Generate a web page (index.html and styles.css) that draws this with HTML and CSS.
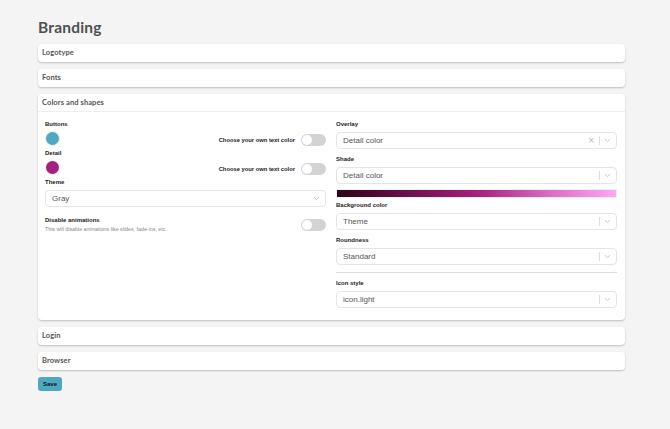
FILE: index.html
```html
<!DOCTYPE html>
<html>
<head>
<meta charset="utf-8">
<link rel="stylesheet" href="styles.css">
</head>
<body>
<div class="page">
  <h1 class="title">Branding</h1>
  <div class="card"><div class="card-head">Logotype</div></div>
  <div class="card"><div class="card-head">Fonts</div></div>
  <div class="card">
    <div class="card-head divided">Colors and shapes</div>
    <div class="card-body">
      <div class="col">
        <div class="label">Buttons</div>
        <div class="color-row">
          <span class="swatch swatch-blue"></span>
          <span class="toggle-wrap"><span class="toggle-label">Choose your own text color</span><span class="toggle"></span></span>
        </div>
        <div class="label">Detail</div>
        <div class="color-row">
          <span class="swatch swatch-purple"></span>
          <span class="toggle-wrap"><span class="toggle-label">Choose your own text color</span><span class="toggle"></span></span>
        </div>
        <div class="label">Theme</div>
        <div class="select"><span class="select-value">Gray</span><span class="chev-only"><svg width="7" height="5" viewBox="0 0 7 5"><path d="M1 1.2 L3.5 3.6 L6 1.2" fill="none" stroke="#bbb" stroke-width="0.8"/></svg></span></div>
        <div class="anim-row">
          <div>
            <div class="anim-title">Disable animations</div>
            <div class="anim-sub">This will disable animations like slides, fade-ins, etc.</div>
          </div>
          <span class="toggle"></span>
        </div>
      </div>
      <div class="col">
        <div class="label">Overlay</div>
        <div class="select"><span class="select-value">Detail color</span><span class="indicators"><span class="clear">×</span><span class="sep"></span><svg width="7" height="5" viewBox="0 0 7 5"><path d="M1 1.2 L3.5 3.6 L6 1.2" fill="none" stroke="#bbb" stroke-width="0.8"/></svg></span></div>
        <div class="label gap">Shade</div>
        <div class="select"><span class="select-value">Detail color</span><span class="indicators"><span class="sep"></span><svg width="7" height="5" viewBox="0 0 7 5"><path d="M1 1.2 L3.5 3.6 L6 1.2" fill="none" stroke="#bbb" stroke-width="0.8"/></svg></span></div>
        <div class="gradient"></div>
        <div class="label">Background color</div>
        <div class="select"><span class="select-value">Theme</span><span class="indicators"><span class="sep"></span><svg width="7" height="5" viewBox="0 0 7 5"><path d="M1 1.2 L3.5 3.6 L6 1.2" fill="none" stroke="#bbb" stroke-width="0.8"/></svg></span></div>
        <div class="label gap">Roundness</div>
        <div class="select"><span class="select-value">Standard</span><span class="indicators"><span class="sep"></span><svg width="7" height="5" viewBox="0 0 7 5"><path d="M1 1.2 L3.5 3.6 L6 1.2" fill="none" stroke="#bbb" stroke-width="0.8"/></svg></span></div>
        <div class="rule"></div>
        <div class="label">Icon style</div>
        <div class="select"><span class="select-value">icon.light</span><span class="indicators"><span class="sep"></span><svg width="7" height="5" viewBox="0 0 7 5"><path d="M1 1.2 L3.5 3.6 L6 1.2" fill="none" stroke="#bbb" stroke-width="0.8"/></svg></span></div>
      </div>
    </div>
  </div>
  <div class="card"><div class="card-head">Login</div></div>
  <div class="card"><div class="card-head">Browser</div></div>
  <button class="save">Save</button>
</div>
</body>
</html>
```
FILE: styles.css
```css
* { box-sizing: border-box; }
html, body { margin: 0; padding: 0; }
body {
  background: #f4f4f4;
  font-family: "Lato", "Liberation Sans", sans-serif;
  color: #333;
  width: 670px;
  height: 429px;
  overflow: hidden;
}
.page {
  padding: 17px 45px 0 38px;
  display: flex;
  flex-direction: column;
  gap: 7px;
}
.title {
  margin: 0 0 -1px 0;
  font-family: "Lato", sans-serif;
  font-size: 15.5px;
  line-height: 21px;
  font-weight: 700;
  color: #505050;
  letter-spacing: 0.2px;
}
.card {
  background: #fff;
  border-radius: 4px;
  box-shadow: 0 1px 2px rgba(0,0,0,0.22);
}
.card-head {
  height: 18px;
  line-height: 18px;
  padding-left: 4px;
  font-family: "Lato", sans-serif;
  font-size: 7.5px;
  font-weight: 700;
  color: #555;
  letter-spacing: 0.1px;
}
.card-head.divided {
  border-bottom: 1px solid #eee;
}
.card-body {
  display: grid;
  grid-template-columns: 281px 281px;
  column-gap: 10px;
  padding: 7px 8px 12px 7px;
}
.col { display: flex; flex-direction: column; }
.label {
  font-family: "Liberation Sans", Arial, sans-serif;
  font-size: 6px;
  font-weight: 700;
  line-height: 10px;
  color: #222;
}
.label.gap { margin-top: 5px; }
.col > .label + .select { margin-top: 3px; }
.color-row {
  height: 19px;
  display: flex;
  align-items: center;
  justify-content: space-between;
}
.swatch {
  width: 13px;
  height: 13px;
  border-radius: 50%;
  margin-left: 1px;
  box-shadow: 0 0 0 1px #eee;
}
.swatch-blue { background: #4da9c1; }
.swatch-purple { background: #a41f7f; }
.toggle-wrap { display: flex; align-items: center; gap: 6px; margin-top: 2px; }
.toggle-label {
  font-family: "Liberation Sans", Arial, sans-serif;
  font-size: 5.8px;
  font-weight: 700;
  color: #222;
}
.toggle {
  width: 25px;
  height: 12px;
  border-radius: 6px;
  background: #d3d3d3;
  position: relative;
  display: inline-block;
  flex: none;
}
.toggle::after {
  content: "";
  position: absolute;
  left: 1px;
  top: 1px;
  width: 10px;
  height: 10px;
  border-radius: 50%;
  background: #fff;
}
.select {
  height: 17px;
  border: 1px solid #e4e4e4;
  border-radius: 4px;
  display: flex;
  align-items: center;
  justify-content: space-between;
  padding: 0 5px 0 6px;
  background: #fff;
}
.select-value {
  font-family: "Liberation Sans", Arial, sans-serif;
  font-size: 8px;
  color: #555;
}
.indicators { display: flex; align-items: center; gap: 4px; }
.clear { color: #bbb; font-size: 9px; line-height: 9px; font-family: "DejaVu Sans", sans-serif; }
.sep { width: 1px; height: 9px; background: #ddd; }
.chev-only { display: flex; }
.anim-row {
  display: flex;
  justify-content: space-between;
  align-items: center;
  margin-top: 9px;
}
.anim-title {
  font-family: "Liberation Sans", Arial, sans-serif;
  font-size: 6px;
  font-weight: 700;
  line-height: 9px;
  color: #222;
}
.anim-sub {
  font-family: "Liberation Sans", Arial, sans-serif;
  font-size: 5.3px;
  line-height: 8px;
  color: #888;
}
.gradient {
  height: 9px;
  margin: 5px 0 2px;
  background: linear-gradient(to right, #2a0418 0%, #6a0f4b 25%, #a41f7f 50%, #d76ac0 75%, #ffa6f5 100%);
  border: 1px solid #eee;
}
.rule {
  height: 1px;
  background: #ddd;
  margin: 7px 0 5px;
}
.save {
  align-self: flex-start;
  width: 24px;
  height: 14px;
  border: none;
  border-radius: 3px;
  background: #4fa8c1;
  color: #111;
  font-family: "Liberation Sans", Arial, sans-serif;
  font-size: 6px;
  font-weight: 700;
  padding: 0;
}
```
